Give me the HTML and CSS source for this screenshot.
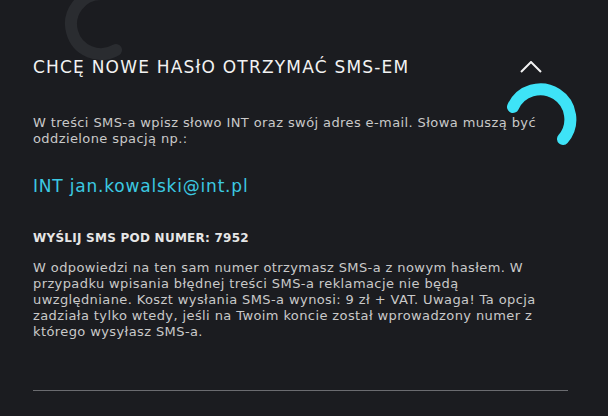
FILE: index.html
```html
<!DOCTYPE html>
<html lang="pl">
<head>
    <meta charset="UTF-8">
    <title>Nowe hasło SMS-em</title>
    <link rel="stylesheet" href="styles.css">
</head>
<body>
<div class="page">
    <svg class="spin spin-gray" width="80" height="80" viewBox="0 0 80 80">
        <path d="M40 10 A30 30 0 1 0 55 66" fill="none" stroke="#2a2c30" stroke-width="12" stroke-linecap="round"/>
    </svg>
    <svg class="spin spin-cyan" width="80" height="80" viewBox="0 0 80 80">
        <path d="M13 27 A30 30 0 1 1 63 59" fill="none" stroke="#3ee3f7" stroke-width="12" stroke-linecap="round"/>
    </svg>

    <div class="panel">
        <div class="head">
            <h2 class="title">CHCĘ NOWE HASłO OTRZYMAĆ SMS-EM</h2>
            <svg class="chevron" width="22" height="12" viewBox="0 0 22 12">
                <path d="M1 11 L11 1 L21 11" fill="none" stroke="#f2f2f2" stroke-width="2"/>
            </svg>
        </div>
        <p class="txt first">W treści SMS-a wpisz słowo INT oraz swój adres e-mail. Słowa muszą być oddzielone spacją np.:</p>
        <p class="mail">INT jan.kowalski@int.pl</p>
        <p class="number">WYŚLIJ SMS POD NUMER: 7952</p>
        <p class="txt">W odpowiedzi na ten sam numer otrzymasz SMS-a z nowym hasłem. W przypadku wpisania błędnej treści SMS-a reklamacje nie będą uwzględniane. Koszt wysłania SMS-a wynosi: 9 zł + VAT. Uwaga! Ta opcja zadziała tylko wtedy, jeśli na Twoim koncie został wprowadzony numer z którego wysyłasz SMS-a.</p>
        <div class="line"></div>
    </div>
</div>
</body>
</html>
```

FILE: styles.css
```css
body {
    margin: 0;
    background: #1b1c20;
    font-family: "DejaVu Sans", sans-serif;
}

.page {
    position: relative;
    height: 416px;
    overflow: hidden;
}

.panel {
    width: 535px;
    padding: 56px 0 0 33px;
}

.head {
    display: flex;
    align-items: center;
    justify-content: space-between;
    padding-right: 26px;
}

.title {
    margin: 0;
    color: #f2f2f2;
    font-size: 17px;
    font-weight: normal;
    letter-spacing: 1.2px;
    line-height: 22px;
}

.chevron {
    display: block;
}

.txt {
    max-width: 512px;
    margin: 0;
    color: #c9c9c9;
    font-size: 13px;
    line-height: 16px;
    letter-spacing: 0.4px;
}

.first {
    margin-top: 37px;
}

.mail {
    margin: 28px 0 0;
    color: #3cc9e2;
    font-size: 17px;
    line-height: 22px;
    letter-spacing: 0.8px;
}

.number {
    margin: 33px 0 14px;
    color: #e6e6e6;
    font-size: 12px;
    font-weight: bold;
    line-height: 16px;
    letter-spacing: 0.25px;
}

.line {
    margin-top: 50px;
    height: 1px;
    background: #6b6c70;
}

/* loading spinners over the panel */
.spin {
    position: absolute;
}

.spin-gray {
    left: 61px;
    top: -16px;
}

.spin-cyan {
    left: 500px;
    top: 80px;
}
```
